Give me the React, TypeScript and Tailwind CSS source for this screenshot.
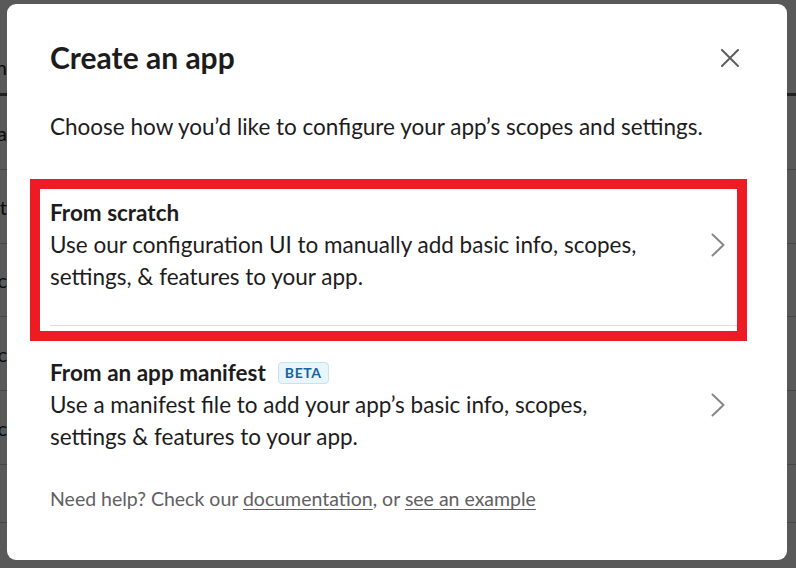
import React from 'react';

const rows = [
  { text: 'Extra', h: 'h-[74px]' },
  { text: 'Test', h: 'h-[74px]' },
  { text: 'Spec', h: 'h-[73px]' },
  { text: 'Spec', h: 'h-[74px]' },
  { text: 'Spec', h: 'h-[74px]' },
  { text: '', h: 'h-[58px]' },
];

function Chevron() {
  return (
    <svg width="14" height="24" viewBox="0 0 14 24" fill="none" className="shrink-0 mr-[19px]">
      <path d="M1.5 1.5 L12.5 12 L1.5 22.5" stroke="#868686" strokeWidth="2" strokeLinecap="round" strokeLinejoin="round" />
    </svg>
  );
}

export default function App() {
  return (
    <div className="relative w-[796px] h-[568px] overflow-hidden bg-white font-['Lato',sans-serif]">
      {/* Page behind the modal */}
      <div className="flex flex-col text-[20px] text-[#1d1c1d]">
        <div className="h-[96px] flex items-start pt-[52px] border-b-[3px] border-[#5a5a5a]">
          <div className="w-[7px] overflow-hidden flex justify-end whitespace-nowrap">Nam</div>
        </div>
        {rows.map((r, i) => (
          <div key={i} className={`${r.h} flex items-center border-b border-[#c8c8c8]`}>
            <div className="w-[7px] overflow-hidden flex justify-end whitespace-nowrap">{r.text}</div>
          </div>
        ))}
      </div>

      {/* Dim overlay */}
      <div className="absolute inset-0 bg-black/65" />

      {/* Modal */}
      <div className="absolute left-[7px] top-[4px] w-[780px] h-[556px] rounded-[9px] bg-white px-[43px] text-[#1d1c1d]">
        <div className="flex items-center justify-between pt-[33px]">
          <h1 className="text-[30px] leading-[40px] font-bold">Create an app</h1>
          <svg width="18" height="18" viewBox="0 0 18 18" className="mr-[5px] mt-[2px]">
            <path d="M1 1 L17 17 M17 1 L1 17" stroke="#5e5e5e" strokeWidth="2" strokeLinecap="round" />
          </svg>
        </div>

        <p className="mt-[34px] text-[22.5px] leading-[32px]">
          Choose how you’d like to configure your app’s scopes and settings.
        </p>

        <div className="mt-[54px] pb-[32px] border-b border-[#dddddd] flex items-center justify-between">
          <div>
            <div className="text-[22.5px] leading-[32px] font-bold">From scratch</div>
            <div className="text-[22.5px] leading-[32px]">
              Use our configuration UI to manually add basic info, scopes,
              <br />
              settings, &amp; features to your app.
            </div>
          </div>
          <Chevron />
        </div>

        <div className="pt-[31px] flex items-center justify-between">
          <div>
            <div className="flex items-center text-[22.5px] leading-[32px] font-bold">
              From an app manifest
              <span className="ml-[12px] h-[22px] px-[6px] flex items-center rounded-[4px] bg-[#e8f5fa] border border-[#c5e4f2] text-[#1264a3] text-[14px] leading-none font-bold tracking-[0.6px]">
                BETA
              </span>
            </div>
            <div className="text-[22.5px] leading-[32px]">
              Use a manifest file to add your app’s basic info, scopes,
              <br />
              settings &amp; features to your app.
            </div>
          </div>
          <Chevron />
        </div>

        <p className="mt-[33px] text-[19.5px] leading-[26px] text-[#616061]">
          Need help? Check our <span className="underline underline-offset-[3px]">documentation</span>, or{' '}
          <span className="underline underline-offset-[3px]">see an example</span>
        </p>

        {/* Red highlight annotation */}
        <div className="absolute left-[23px] top-[175px] w-[717px] h-[162px] border-[10px] border-[#ed1c24]" />
      </div>
    </div>
  );
}
